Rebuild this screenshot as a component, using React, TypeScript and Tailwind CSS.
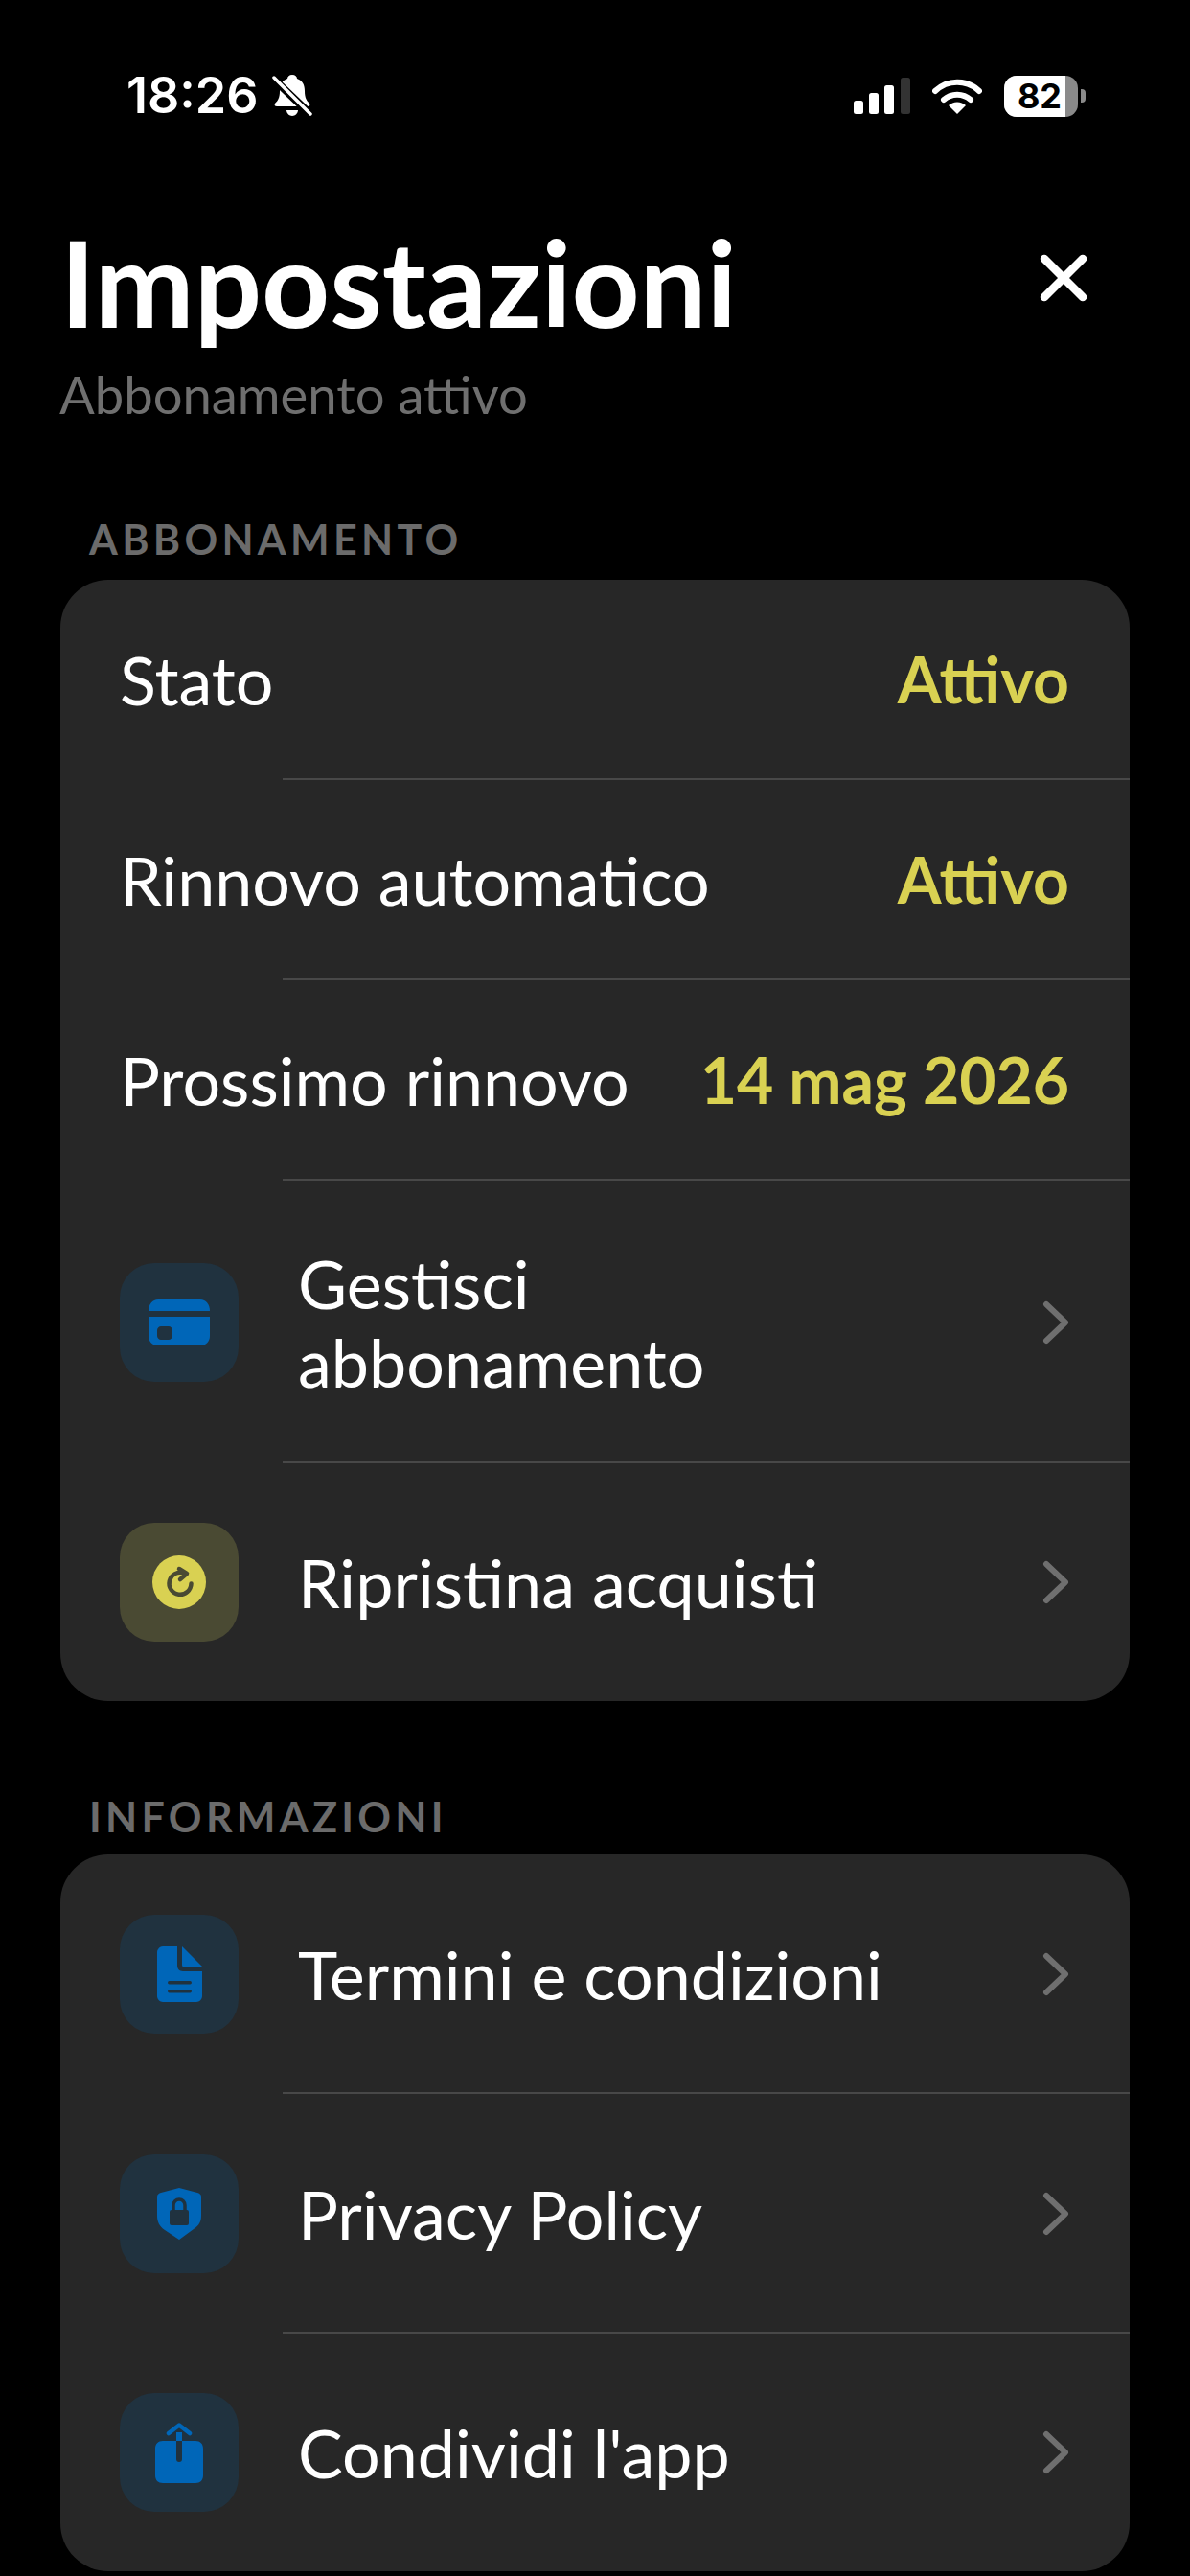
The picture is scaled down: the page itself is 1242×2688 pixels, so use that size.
import React from "react";

const Blue = "#0066b8";

function Chevron() {
  return (
    <svg width="30" height="46" viewBox="0 0 30 46" fill="none" className="shrink-0">
      <path d="M6 4l20 19L6 42" stroke="#6f6f6f" strokeWidth="6" strokeLinecap="round" strokeLinejoin="round" />
    </svg>
  );
}

function IconBox({ children, yellow }: { children: React.ReactNode; yellow?: boolean }) {
  return (
    <div
      className={
        "w-[124px] h-[124px] rounded-[36px] flex items-center justify-center shrink-0 " +
        (yellow ? "bg-[#4a4a33]" : "bg-[#20323f]")
      }
    >
      {children}
    </div>
  );
}

function Card() {
  return (
    <svg width="64" height="48" viewBox="0 0 64 48">
      <path fill={Blue} d="M0 12C0 5 4 0 10 0h44c6 0 10 5 10 12H0z" />
      <path fill={Blue} fillRule="evenodd" d="M0 18h64v20c0 6-4 10-10 10H10C4 48 0 44 0 38V18zm13 10c-2 0-4 2-4 4v6c0 2 2 4 4 4h8c2 0 4-2 4-4v-6c0-2-2-4-4-4h-8z" />
    </svg>
  );
}

function Restore() {
  return (
    <svg width="56" height="56" viewBox="0 0 56 56">
      <circle cx="28" cy="28" r="28" fill="#d9d152" />
      <path d="M33 18.500a11.500 11.500 0 1 0 7.500 11" fill="none" stroke="#4a4a33" strokeWidth="4.500" strokeLinecap="round" />
      <path d="M28 14l8 5-7 6" fill="none" stroke="#4a4a33" strokeWidth="4.500" strokeLinecap="round" strokeLinejoin="round" />
    </svg>
  );
}

function Doc() {
  return (
    <svg width="47" height="58" viewBox="0 0 47 58">
      <path fill={Blue} d="M6 0h15v20c0 3 2 6 6 6h20v26c0 3-3 6-6 6H6c-3 0-6-3-6-6V6c0-3 3-6 6-6z" />
      <path fill={Blue} d="M26 0l21 21v1H29c-2 0-3-1-3-3V0z" />
      <rect x="11" y="36" width="25" height="3.500" rx="1.700" fill="#20323f" />
      <rect x="11" y="45" width="25" height="3.500" rx="1.700" fill="#20323f" />
    </svg>
  );
}

function Shield() {
  return (
    <svg width="46" height="54" viewBox="0 0 46 54">
      <path fill={Blue} d="M23 0l19 5c2 .6 4 2 4 4v20c0 6-2 10-8 14l-15 11-15-10C2 40 0 35 0 29V9c0-2 2-3.500 4-4z" />
      <rect x="13" y="23" width="20" height="16" rx="2" fill="#20323f" />
      <path d="M17 24v-6a6 6 0 0 1 12 0v6" fill="none" stroke="#20323f" strokeWidth="3.500" />
    </svg>
  );
}

function Share() {
  return (
    <svg width="50" height="63" viewBox="0 0 50 63">
      <path fill={Blue} d="M8 19h14v19a3 3 0 0 0 6 0V19h14c5 0 8 3 8 8v28c0 5-3 8-8 8H8c-5 0-8-3-8-8V27c0-5 3-8 8-8z" />
      <path fill={Blue} d="M22 10h6v9h-6z" />
      <path d="M14 11L25 2.500 36 11" fill="none" stroke={Blue} strokeWidth="4.500" strokeLinecap="round" strokeLinejoin="round" />
    </svg>
  );
}

function ValueRow({ label, value }: { label: string; value: string }) {
  return (
    <div className="relative h-[209px] pl-[62px] pr-[63px] pb-[2px] flex items-center justify-between">
      <span className="text-[70px] leading-[82px] text-white">{label}</span>
      <span className="text-[66px] font-bold text-[#d9d152]">{value}</span>
      <div className="absolute left-[232px] right-0 bottom-0 h-[2px] bg-[#484848]" />
    </div>
  );
}

function LinkRow({
  icon,
  label,
  h,
  last,
  yellow,
}: {
  icon: React.ReactNode;
  label: React.ReactNode;
  h: string;
  last?: boolean;
  yellow?: boolean;
}) {
  return (
    <div className={"relative pl-[62px] pr-[63px] flex items-center " + h}>
      <IconBox yellow={yellow}>{icon}</IconBox>
      <span className="ml-[62px] flex-1 text-[70px] leading-[82px] text-white">{label}</span>
      <Chevron />
      {!last && <div className="absolute left-[232px] right-0 bottom-0 h-[2px] bg-[#484848]" />}
    </div>
  );
}

function SectionLabel({ children }: { children: React.ReactNode }) {
  return (
    <div className="pl-[30px] text-[43px] leading-[48px] font-bold tracking-[4.3px] text-[#6b6b6b]">{children}</div>
  );
}

export default function App() {
  return (
    <div className="w-[1242px] h-[2688px] bg-black overflow-hidden font-['Lato',sans-serif]">
      <div className="h-[75px]" />
      <div className="flex items-center justify-between h-[50px] pl-[132px] pr-[109px]">
        <div className="flex items-center">
          <span className="font-['Inter',sans-serif] text-[52px] font-semibold text-white leading-none">18:26</span>
          <svg width="42" height="44" viewBox="0 0 42 44" className="ml-[14px]">
            <path fill="#fff" d="M21 0c3 0 5 2 5 4 6 2 8 7 8 13 0 7 2 10 5 13 1 2 0 3-2 3H5c-2 0-3-1-2-3 3-3 5-6 5-13 0-6 2-11 8-13 0-2 2-4 5-4z" />
            <path fill="#fff" d="M15 37h12c0 3-3 6-6 6s-6-3-6-6z" />
            <path d="M0 3l40 38" stroke="#000" strokeWidth="8" />
            <path d="M2 3l38 38" stroke="#fff" strokeWidth="3.500" strokeLinecap="round" />
          </svg>
        </div>
        <div className="flex items-center">
          <svg width="59" height="38" viewBox="0 0 59 38">
            <rect x="0" y="24" width="10" height="14" rx="2.500" fill="#fff" />
            <rect x="16" y="16" width="10" height="22" rx="2.500" fill="#fff" />
            <rect x="32" y="8" width="10" height="30" rx="2.500" fill="#fff" />
            <rect x="49" y="0" width="10" height="38" rx="2.500" fill="#333" />
          </svg>
          <svg width="52" height="38" viewBox="0 0 52 38" className="ml-[23px]">
            <path d="M3 14a33 33 0 0 1 46 0" fill="none" stroke="#fff" strokeWidth="6" strokeLinecap="round" />
            <path d="M12 23a21 21 0 0 1 28 0" fill="none" stroke="#fff" strokeWidth="6" strokeLinecap="round" />
            <path d="M17 29a13 13 0 0 1 18 0l-9 9z" fill="#fff" />
          </svg>
          <div className="ml-[23px] w-[77px] h-[43px] rounded-[13px] bg-[#8a8a8a] overflow-hidden">
            <div className="w-[64px] h-full bg-white flex items-center justify-center font-['Inter',sans-serif] text-[36px] font-bold text-black leading-none pl-[10px]">82</div>
          </div>
          <div className="ml-[3px] w-[5px] h-[14px] rounded-r-[4px] bg-[#8a8a8a]" />
        </div>
      </div>

      <div className="mt-[107px] pl-[63px] pr-[107px] flex items-center justify-between">
        <h1 className="text-[124px] leading-[124px] font-bold text-white">Impostazioni</h1>
        <svg width="50" height="50" viewBox="0 0 50 50" className="mt-[-8px]">
          <path d="M5 5l40 40M45 5L5 45" stroke="#fff" strokeWidth="8.500" strokeLinecap="round" />
        </svg>
      </div>
      <div className="pl-[62px] mt-[24px] text-[54.4px] leading-[62px] text-[#6f6f6f]">Abbonamento attivo</div>

      <div className="mt-[97px] px-[63px]">
        <SectionLabel>ABBONAMENTO</SectionLabel>
        <div className="mt-[18px] rounded-[50px] bg-[#272727] overflow-hidden">
          <ValueRow label="Stato" value="Attivo" />
          <ValueRow label="Rinnovo automatico" value="Attivo" />
          <ValueRow label="Prossimo rinnovo" value="14 mag 2026" />
          <LinkRow h="h-[295px]" icon={<Card />} label={<>Gestisci<br />abbonamento</>} />
          <LinkRow h="h-[248px]" yellow icon={<Restore />} label="Ripristina acquisti" last />
        </div>
      </div>

      <div className="mt-[97px] px-[63px]">
        <SectionLabel>INFORMAZIONI</SectionLabel>
        <div className="mt-[15px] rounded-[50px] bg-[#272727] overflow-hidden">
          <LinkRow h="h-[250px]" icon={<Doc />} label="Termini e condizioni" />
          <LinkRow h="h-[250px]" icon={<Shield />} label="Privacy Policy" />
          <LinkRow h="h-[248px]" icon={<Share />} label="Condividi l'app" last />
        </div>
      </div>
    </div>
  );
}
